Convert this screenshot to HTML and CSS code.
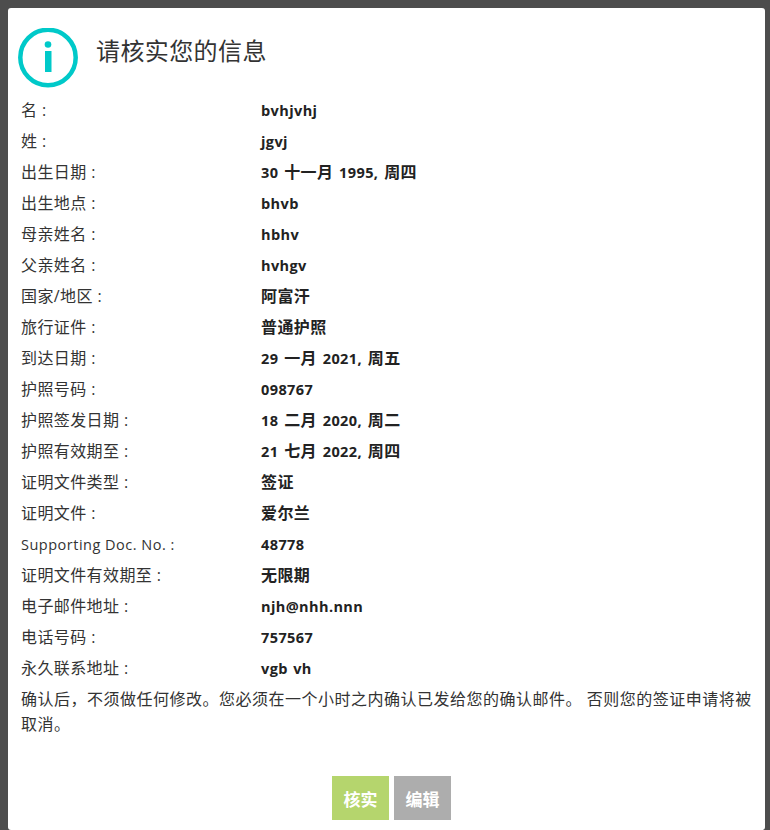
FILE: index.html
```html
<!DOCTYPE html>
<html lang="zh-CN">
<head>
  <meta charset="UTF-8">
  <title>请核实您的信息</title>
  <link rel="stylesheet" href="styles.css">
</head>
<body>
  <div class="modal">
    <!-- Header -->
    <div class="modal-head">
      <svg class="info-icon" width="60" height="60" viewBox="0 0 60 60">
        <circle cx="30" cy="29.5" r="27.7" fill="none" stroke="#00c9c9" stroke-width="4.5"></circle>
        <circle cx="30" cy="16.5" r="3.3" fill="#00c9c9"></circle>
        <rect x="27" y="23" width="6.5" height="21" fill="#00c9c9"></rect>
      </svg>
      <h2>请核实您的信息</h2>
    </div>

    <!-- Details -->
    <div class="details">
      <div class="row"><span class="label">名 :</span><span class="value latin">bvhjvhj</span></div>
      <div class="row"><span class="label">姓 :</span><span class="value latin">jgvj</span></div>
      <div class="row"><span class="label">出生日期 :</span><span class="value"><span class="latin">30</span> 十一月 <span class="latin">1995,</span> 周四</span></div>
      <div class="row"><span class="label">出生地点 :</span><span class="value latin">bhvb</span></div>
      <div class="row"><span class="label">母亲姓名 :</span><span class="value latin">hbhv</span></div>
      <div class="row"><span class="label">父亲姓名 :</span><span class="value latin">hvhgv</span></div>
      <div class="row"><span class="label">国家/地区 :</span><span class="value">阿富汗</span></div>
      <div class="row"><span class="label">旅行证件 :</span><span class="value">普通护照</span></div>
      <div class="row"><span class="label">到达日期 :</span><span class="value"><span class="latin">29</span> 一月 <span class="latin">2021,</span> 周五</span></div>
      <div class="row"><span class="label">护照号码 :</span><span class="value latin">098767</span></div>
      <div class="row"><span class="label">护照签发日期 :</span><span class="value"><span class="latin">18</span> 二月 <span class="latin">2020,</span> 周二</span></div>
      <div class="row"><span class="label">护照有效期至 :</span><span class="value"><span class="latin">21</span> 七月 <span class="latin">2022,</span> 周四</span></div>
      <div class="row"><span class="label">证明文件类型 :</span><span class="value">签证</span></div>
      <div class="row"><span class="label">证明文件 :</span><span class="value">爱尔兰</span></div>
      <div class="row"><span class="label latin">Supporting Doc. No. :</span><span class="value latin">48778</span></div>
      <div class="row"><span class="label">证明文件有效期至 :</span><span class="value">无限期</span></div>
      <div class="row"><span class="label">电子邮件地址 :</span><span class="value latin">njh@nhh.nnn</span></div>
      <div class="row"><span class="label">电话号码 :</span><span class="value latin">757567</span></div>
      <div class="row"><span class="label">永久联系地址 :</span><span class="value latin">vgb vh</span></div>
    </div>

    <p class="notice">确认后，不须做任何修改。您必须在一个小时之内确认已发给您的确认邮件。 否则您的签证申请将被取消。</p>

    <!-- Buttons -->
    <div class="actions">
      <button class="btn confirm">核实</button>
      <button class="btn edit">编辑</button>
    </div>
  </div>
</body>
</html>
```

FILE: styles.css
```css
/* General Styles */
body {
  margin: 0;
  padding: 8px 5px 0 8px;
  height: 830px;
  box-sizing: border-box;
  overflow: hidden;
  background-color: #4d4d4d;
  font-family: "Open Sans", "Noto Sans CJK SC", sans-serif;
  font-size: 16px;
  letter-spacing: 0.4px;
  color: #333;
}

/* Dialog */
.modal {
  background-color: #fff;
  border-radius: 3px;
  padding: 0 13px;
  height: 100%;
}

.modal-head {
  display: flex;
  align-items: flex-start;
  padding-top: 20px;
  height: 87px;
  box-sizing: border-box;
}

.info-icon {
  margin-left: -3px;
  flex: none;
}

.modal-head h2 {
  margin: 4px 0 0 18px;
  font-size: 24px;
  font-weight: normal;
  line-height: 38px;
}

/* Detail rows */
.row {
  display: flex;
  height: 31px;
  line-height: 31px;
}

.label {
  width: 240px;
  flex: none;
}

.label.latin {
  letter-spacing: 0.5px;
}

.value {
  font-weight: bold;
  word-spacing: 1.2px;
  color: #222;
}

.latin {
  font-size: 14.5px;
}

.notice {
  margin: 0;
  line-height: 25px;
  padding-top: 3px;
  letter-spacing: 0.5px;
}

/* Buttons */
.actions {
  display: flex;
  justify-content: center;
  gap: 5px;
  margin-top: 39px;
  padding-left: 10px;
}

.btn {
  width: 57px;
  height: 44px;
  border: none;
  padding: 0;
  color: #fff;
  font-family: inherit;
  font-size: 17px;
  font-weight: bold;
}

.btn.confirm {
  background-color: #b5d56d;
}

.btn.edit {
  background-color: #adadad;
}
```
